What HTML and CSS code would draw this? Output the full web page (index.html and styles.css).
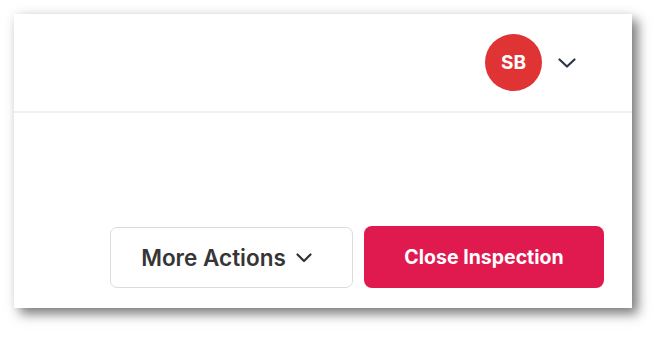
FILE: index.html
```html
<!DOCTYPE html>
<html>
<head>
<meta charset="utf-8">
<link rel="stylesheet" href="styles.css">
</head>
<body>
<div class="card">
  <header class="topbar">
    <div class="avatar">SB</div>
    <svg class="caret" width="18" height="10" viewBox="0 0 18 10"><path d="M1.5 1.5 L9 8.5 L16.5 1.5" fill="none" stroke="#2d3748" stroke-width="2.2" stroke-linecap="round" stroke-linejoin="round"/></svg>
  </header>
  <main class="content">
    <div class="actions">
      <button class="btn btn-outline">More Actions
        <svg class="btn-caret" width="16" height="10" viewBox="0 0 16 10"><path d="M1.5 1.5 L8 8 L14.5 1.5" fill="none" stroke="#333" stroke-width="2.2" stroke-linecap="round" stroke-linejoin="round"/></svg>
      </button>
      <button class="btn btn-primary">Close Inspection</button>
    </div>
  </main>
</div>
</body>
</html>
```
FILE: styles.css
```css
html, body {
  margin: 0;
  padding: 0;
  background: #ffffff;
}
body {
  padding: 14px 0 0 14px;
  min-height: 337px;
  box-sizing: border-box;
  font-family: Inter, "Noto Sans", sans-serif;
}
.card {
  width: 618px;
  height: 294px;
  background: #ffffff;
  box-shadow: 6px 6px 11px rgba(0, 0, 0, 0.5), 0 0 12px rgba(0, 0, 0, 0.06);
  display: flex;
  flex-direction: column;
}
.topbar {
  border-bottom: 2px solid #efefef;
  display: flex;
  align-items: center;
  justify-content: flex-end;
  padding-right: 56px;
  box-sizing: border-box;
  height: 99px;
}
.avatar {
  width: 57px;
  height: 57px;
  border-radius: 50%;
  background: #e03434;
  color: #ffffff;
  font-weight: 700;
  font-size: 19px;
  display: flex;
  align-items: center;
  justify-content: center;
}
.caret {
  margin-left: 16px;
  display: block;
}
.content {
  flex: 1;
  display: flex;
  align-items: flex-end;
  justify-content: flex-end;
  padding: 0 28px 20px 0;
}
.actions {
  display: flex;
  align-items: center;
  gap: 11px;
}
.btn {
  font-family: Inter, "Noto Sans", sans-serif;
  border-radius: 7px;
  height: 62px;
  display: flex;
  align-items: center;
  justify-content: center;
  cursor: pointer;
  box-sizing: border-box;
  padding: 0;
}
.btn-outline {
  width: 243px;
  height: 61px;
  background: #ffffff;
  border: 1px solid #dcdcdc;
  color: #363636;
  font-size: 22.5px;
  font-weight: 600;
  gap: 10px;
  padding-right: 10px;
}
.btn-caret {
  display: block;
  margin-top: 2px;
}
.btn-primary {
  width: 240px;
  background: #e0194f;
  border: none;
  color: #ffffff;
  font-size: 19.5px;
  font-weight: 700;
  border-radius: 8px;
}
```
